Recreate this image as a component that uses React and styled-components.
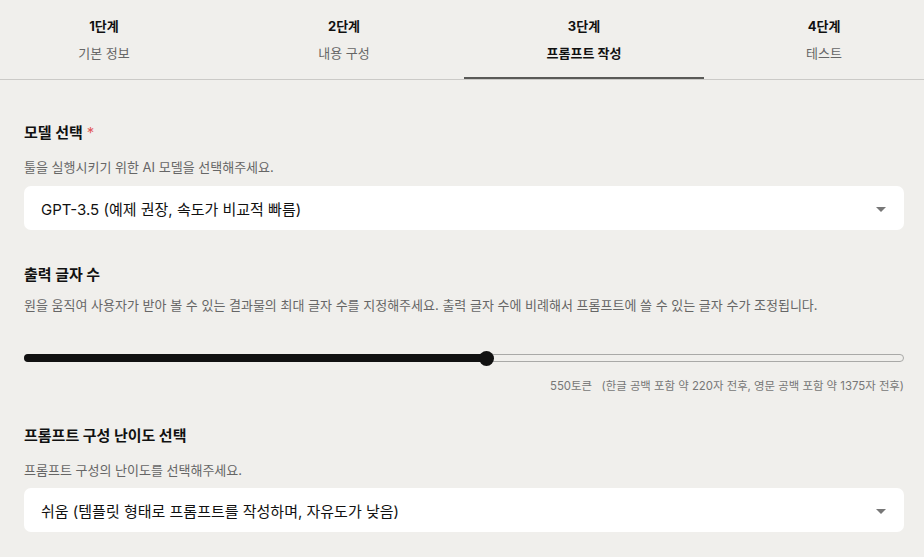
import React from "react";
import styled, { createGlobalStyle } from "styled-components";

const Global = createGlobalStyle`
  html, body { margin: 0; padding: 0; background: #f0efec; overflow: hidden; }
  body { font-family: Inter, "Noto Sans CJK KR", "Noto Sans", sans-serif; color: #111; }
  * { box-sizing: border-box; }
`;

const Page = styled.div`
  width: 924px;
  height: 557px;
  background: #f0efec;
  overflow: hidden;
`;

const TabBar = styled.div`
  position: relative;
  height: 80px;
  border-bottom: 1px solid #cbcac7;
  overflow: hidden;
`;

const TabRow = styled.div`
  display: flex;
  width: 960px;
  margin-left: -16px;
  height: 79px;
`;

const Tab = styled.div`
  width: 240px;
  display: flex;
  flex-direction: column;
  align-items: center;
  padding-top: 17px;
  gap: 9px;
  border-bottom: 3px solid ${(p) => (p.$active ? "#5a5a57" : "transparent")};
  margin-bottom: -1px;
`;

const Step = styled.div`
  font-size: 13px;
  font-weight: 700;
  line-height: 18px;
  color: #111;
`;

const TabName = styled.div`
  font-size: 13px;
  line-height: 18px;
  font-weight: ${(p) => (p.$active ? 700 : 400)};
  color: ${(p) => (p.$active ? "#111" : "#666")};
`;

const Content = styled.div`
  padding: 0 20px 0 24px;
  display: flex;
  flex-direction: column;
`;

const Section = styled.div`
  display: flex;
  flex-direction: column;
  padding-top: ${(p) => p.$top}px;
`;

const Label = styled.div`
  font-size: 15px;
  font-weight: 700;
  line-height: 20px;
  color: #111;
`;

const Required = styled.span`
  color: #e25a5a;
  margin-left: 4px;
  font-weight: 400;
`;

const Desc = styled.div`
  font-size: 13px;
  line-height: 18px;
  color: #666;
  margin-top: ${(p) => p.$mt}px;
`;

const Select = styled.div`
  margin-top: ${(p) => p.$mt}px;
  height: 44px;
  background: #fff;
  border-radius: 7px;
  display: flex;
  align-items: center;
  justify-content: space-between;
  padding: 0 18px 0 17px;
  font-size: 15px;
  color: #111;
`;

const Caret = styled.span`
  width: 0;
  height: 0;
  border-left: 5px solid transparent;
  border-right: 5px solid transparent;
  border-top: 5px solid #777;
  margin-top: 2px;
`;

const SliderWrap = styled.div`
  margin-top: 36px;
  height: 16px;
  position: relative;
  display: flex;
  align-items: center;
`;

const Track = styled.div`
  width: 100%;
  height: 8px;
  border: 1px solid #a9a9a7;
  border-radius: 4px;
  position: relative;
`;

const Fill = styled.div`
  position: absolute;
  left: -1px;
  top: -1px;
  height: 8px;
  background: #111;
  border-radius: 4px;
`;

const Thumb = styled.div`
  position: absolute;
  top: 50%;
  width: 15px;
  height: 15px;
  margin-left: -7.5px;
  margin-top: -7.5px;
  border-radius: 50%;
  background: #111;
`;

const Caption = styled.div`
  margin-top: 12px;
  text-align: right;
  font-size: 11.4px;
  line-height: 16px;
  color: #777;
  white-space: pre;
`;

const tabs = [
  ["1단계", "기본 정보"],
  ["2단계", "내용 구성"],
  ["3단계", "프롬프트 작성"],
  ["4단계", "테스트"],
];

export default function App() {
  const pct = 52.6;
  return (
    <Page>
      <Global />
      <TabBar>
        <TabRow>
          {tabs.map(([s, n], i) => (
            <Tab key={s} $active={i === 2}>
              <Step>{s}</Step>
              <TabName $active={i === 2}>{n}</TabName>
            </Tab>
          ))}
        </TabRow>
      </TabBar>
      <Content>
        <Section $top={43}>
          <Label>
            모델 선택<Required>*</Required>
          </Label>
          <Desc $mt={15}>툴을 실행시키기 위한 AI 모델을 선택해주세요.</Desc>
          <Select $mt={10}>
            <span>GPT-3.5 (예제 권장, 속도가 비교적 빠름)</span>
            <Caret />
          </Select>
        </Section>
        <Section $top={35}>
          <Label>출력 글자 수</Label>
          <Desc $mt={11}>
            원을 움직여 사용자가 받아 볼 수 있는 결과물의 최대 글자 수를 지정해주세요. 출력 글자 수에 비례해서 프롬프트에 쓸 수 있는 글자 수가 조정됩니다.
          </Desc>
          <SliderWrap>
            <Track>
              <Fill style={{ width: `${pct}%` }} />
              <Thumb style={{ left: `${pct}%` }} />
            </Track>
          </SliderWrap>
          <Caption>550토큰   (한글 공백 포함 약 220자 전후, 영문 공백 포함 약 1375자 전후)</Caption>
        </Section>
        <Section $top={32}>
          <Label>프롬프트 구성 난이도 선택</Label>
          <Desc $mt={15}>프롬프트 구성의 난이도를 선택해주세요.</Desc>
          <Select $mt={9}>
            <span>쉬움 (템플릿 형태로 프롬프트를 작성하며, 자유도가 낮음)</span>
            <Caret />
          </Select>
        </Section>
      </Content>
    </Page>
  );
}
